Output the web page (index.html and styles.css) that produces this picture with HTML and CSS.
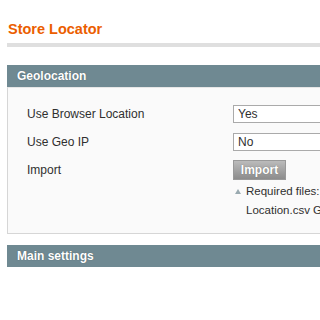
FILE: index.html
```html
<!DOCTYPE html>
<html lang="en">
<head>
    <meta charset="UTF-8">
    <title>Store Locator</title>
    <link rel="stylesheet" href="styles.css">
</head>
<body>
    <div class="page">
        <div class="content-header">
            <h3>Store Locator</h3>
        </div>

        <div class="section-head">Geolocation</div>
        <div class="fieldset">
            <div class="row">
                <label class="label">Use Browser Location</label>
                <div class="value">
                    <select class="select">
                        <option>Yes</option>
                    </select>
                </div>
            </div>
            <div class="row">
                <label class="label">Use Geo IP</label>
                <div class="value">
                    <select class="select">
                        <option>No</option>
                    </select>
                </div>
            </div>
            <div class="row">
                <label class="label">Import</label>
                <div class="value">
                    <button class="btn">Import</button>
                    <p class="note"><span class="arrow"></span>Required files: GeoLiteCity-Blocks.csv, GeoLiteCity-<br>Location.csv GeoLiteCity</p>
                </div>
            </div>
        </div>

        <div class="section-head">Main settings</div>
    </div>
</body>
</html>
```
FILE: styles.css
```css
body {
    margin: 0;
    font-family: Arial, "Liberation Sans", sans-serif;
    font-size: 12px;
    color: #2f2f2f;
    background-color: #fff;
    overflow: hidden;
}

.page {
    width: 700px;
    padding: 20px 0 0 7px;
}

.content-header {
    border-bottom: 4px solid #dfdfdf;
    padding-bottom: 5px;
    margin-bottom: 18px;
}

.content-header h3 {
    margin: 0 0 0 1px;
    font-size: 14.5px;
    line-height: 18px;
    color: #eb5e00;
}

.section-head {
    height: 22px;
    line-height: 22px;
    padding-left: 10px;
    background-color: #6f8992;
    color: #fff;
    font-weight: bold;
    font-size: 12px;
    text-shadow: 0 0 1px #4a5b61;
}

.fieldset {
    background-color: #fafafa;
    border: 1px solid #d6d6d6;
    border-top: 1px solid #e6e6e6;
    padding: 17px 0 13px 19px;
    margin-bottom: 11px;
}

.row {
    display: flex;
    margin-bottom: 10px;
}

.row:last-child {
    margin-bottom: 0;
}

.label {
    width: 206px;
    line-height: 18px;
}

.value {
    flex: 1;
}

.select {
    display: block;
    width: 280px;
    height: 18px;
    padding: 0 0 0 4px;
    border: 1px solid #aaa;
    background-color: #fff;
    font-family: Arial, "Liberation Sans", sans-serif;
    font-size: 12px;
    color: #2f2f2f;
    appearance: none;
    border-radius: 0;
}

.btn {
    display: block;
    width: 53px;
    height: 20px;
    margin: -1px 0 0 0;
    padding: 0;
    border: 1px solid #999;
    background: linear-gradient(#bbb, #8c8c8c);
    color: #fff;
    font-family: Arial, "Liberation Sans", sans-serif;
    font-size: 12px;
    font-weight: bold;
    text-shadow: 0 0 1px #666;
}

.note {
    margin: 2px 0 0 0;
    padding-left: 13px;
    position: relative;
    line-height: 19px;
    font-size: 11.5px;
    white-space: nowrap;
}

.arrow {
    position: absolute;
    left: 2px;
    top: 7px;
    width: 0;
    height: 0;
    border-left: 3px solid transparent;
    border-right: 3px solid transparent;
    border-bottom: 5px solid #9aaab0;
}
```
